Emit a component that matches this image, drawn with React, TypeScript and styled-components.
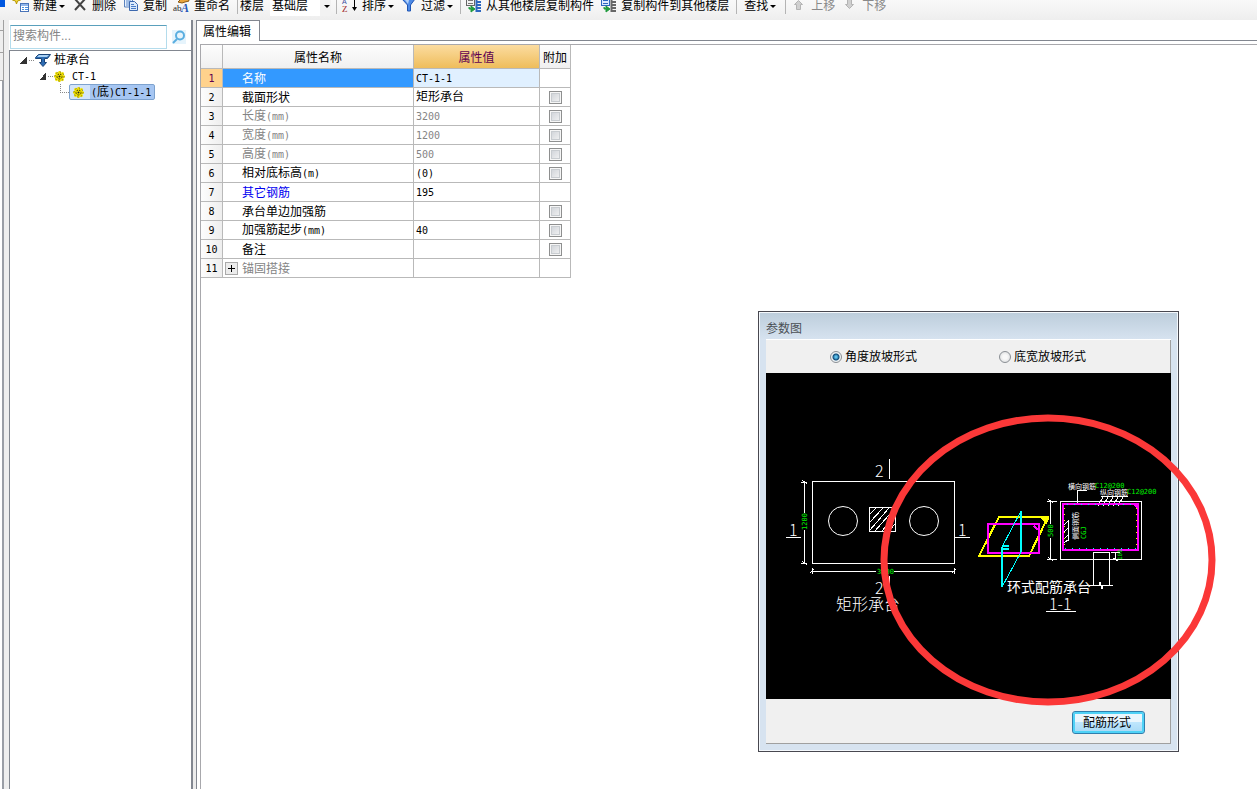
import React, { Fragment, useState } from 'react';
import styled, { createGlobalStyle, css } from 'styled-components';

const line = '#828790';

const GlobalStyle = createGlobalStyle`
  * { box-sizing: border-box; }
  body {
    margin: 0;
    background: #fff;
    color: #000;
    overflow: hidden;
    font: 12px/14px "Liberation Sans", "Noto Sans CJK SC", sans-serif;
  }
  button, input, select { font: inherit; color: inherit; margin: 0; padding: 0; }
`;

/* ---------- text ---------- */

const Latin = styled.span`
  font-family: "DejaVu Sans Mono", monospace;
  font-size: 10px;
`;

function Mixed({ text }: { text: string }) {
  return (
    <span>
      {text.split(/([\x20-\x7e]+)/).map((part, i) =>
        i % 2 ? <Latin key={i}>{part}</Latin> : <Fragment key={i}>{part}</Fragment>
      )}
    </span>
  );
}

/* ---------- toolbar ---------- */

const Screen = styled.div`
  display: flex;
  flex-direction: column;
  height: 100vh;
`;

const Toolbar = styled.div`
  display: flex;
  align-items: flex-start;
  flex: none;
  height: 20px;
  overflow: hidden;
  background: linear-gradient(#f9f9f9, #eeeeee);
  white-space: nowrap;
`;

const CornerMark = styled.span`
  width: 5px;
  height: 7px;
  margin-right: 8px;
  background: #0057e0;
`;

const ToolButton = styled.button<{ $roomy?: boolean }>`
  display: flex;
  align-items: center;
  flex: none;
  height: 12px;
  margin-right: 7px;
  padding: ${p => (p.$roomy ? '0 2px' : '0')};
  border: 0;
  background: none;
  line-height: 14px;
  svg { flex: none; margin-right: 4px; overflow: visible; }
  &:disabled { color: #8a8a8a; }
`;

const Caret = styled.span`
  border: 3px solid transparent;
  border-top-color: #000;
  border-bottom: 0;
  margin-left: 2px;
`;

const Separator = styled.span<{ $tight?: boolean }>`
  flex: none;
  width: 1px;
  height: 14px;
  margin-right: ${p => (p.$tight ? 2 : 5)}px;
  background: #b4b4b4;
`;

const FloorLabel = styled.label`
  flex: none;
  margin-right: 6px;
  line-height: 12px;
`;

const FloorBox = styled.div`
  display: flex;
  align-items: flex-start;
  flex: none;
  width: 61px;
  height: 16px;
  margin-right: 5px;
  background: linear-gradient(90deg, #fff 50px, #f2f2f2 50px);
  ${Caret} { margin-top: 5px; }
`;

const FloorSelect = styled.select`
  appearance: none;
  width: 52px;
  height: 16px;
  padding: 0 0 4px 2px;
  border: 0;
  background: none;
  line-height: 12px;
`;

const icons: Record<string, React.ReactNode> = {
  create: (
    <svg width="16" height="14" viewBox="0 0 16 14">
      <path d="M3.500 -3l1 3 3 1-3 1-1 3-1-3-3-1 3-1z" fill="#f4dc3c" stroke="#b89600" />
      <rect x="7.500" y="4.500" width="8" height="8" fill="#fff" stroke="#4a74b8" />
      <rect x="8" y="5" width="7" height="2" fill="#8fb5ea" />
      <path d="M9 8.500h2M12 8.500h3M9 10.500h2M12 10.500h3" stroke="#4a90e0" />
    </svg>
  ),
  remove: (
    <svg width="16" height="14" viewBox="0 0 16 14">
      <path d="M3 0l10 11M13 0L3 11" stroke="#444" strokeWidth="2" />
    </svg>
  ),
  copy: (
    <svg width="16" height="14" viewBox="0 0 16 14">
      <path d="M1.500-2h6l2 2v8h-8z" fill="#e8f1fc" stroke="#5a82be" />
      <path d="M3 2h5M3 4h3M3 6h3" stroke="#5a8ad0" />
      <path d="M6.500 2.500h5l3 3v6h-8z" fill="#dceafb" stroke="#3c68ae" />
      <path d="M8 5.500h3M8 7.500h5M8 9.500h5" stroke="#4a7cc6" />
    </svg>
  ),
  rename: (
    <svg width="16" height="14" viewBox="0 0 16 14">
      <path d="M4 3l4-4 6 0 1 3-4 1-3 1z" fill="#e9a43c" stroke="#8a5a14" />
      <text x="-1" y="12" fontSize="9" fontFamily="Liberation Serif" fill="#222">ab</text>
      <text x="7" y="13" fontSize="12" fontWeight="bold" fontStyle="italic" fontFamily="Liberation Serif" fill="#2457b8">A</text>
    </svg>
  ),
  sort: (
    <svg width="16" height="14" viewBox="0 0 16 14">
      <text x="0" y="5" fontSize="7" fontFamily="Liberation Sans" fill="#3a4a9c">A</text>
      <text x="0" y="13" fontSize="9" fontFamily="Liberation Serif" fill="#a02828">Z</text>
      <path d="M12.500-1v11" stroke="#000" />
      <path d="M10 8h5l-2.500 4z" />
    </svg>
  ),
  filter: (
    <svg width="16" height="14" viewBox="0 0 16 14">
      <path d="M1 0h13L9.500 6v6h-3V6z" fill="#4d8ae6" stroke="#1f55b4" />
      <path d="M4 1h4l-1 4z" fill="#b4d2fa" />
    </svg>
  ),
  from: (
    <svg width="16" height="14" viewBox="0 0 16 14">
      <rect x=".5" y="-2.500" width="8" height="9" fill="#f2f2f2" stroke="#666" />
      <path d="M2 1.500h5M2 4.500h5" stroke="#777" />
      <path d="M3 8v2h3M5 7l4 3-4 3z" fill="#1e9a3c" stroke="#1e9a3c" />
      <path d="M10.500-1v14M11 0h4M11 3h4M11 6h4M11 9h4M11 12h4" stroke="#2d68c0" strokeWidth="2" />
    </svg>
  ),
  to: (
    <svg width="16" height="14" viewBox="0 0 16 14">
      <rect x=".5" y="-2.500" width="8" height="9" fill="#dceaff" stroke="#2d68c0" />
      <path d="M2 1.500h5M2 4.500h5" stroke="#2d68c0" />
      <path d="M3 8v2h3M5 7l4 3-4 3z" fill="#1e9a3c" stroke="#1e9a3c" />
      <path d="M10.500-1v14M11 0h4M11 3h4M11 6h4M11 9h4M11 12h4" stroke="#666" strokeWidth="2" />
    </svg>
  ),
  up: (
    <svg width="16" height="14" viewBox="0 0 16 14">
      <path d="M7.500 1.500l4 4h-2v5h-4v-5h-2z" fill="#d0d0d0" stroke="#b4b4b4" />
    </svg>
  ),
  down: (
    <svg width="16" height="14" viewBox="0 0 16 14">
      <path d="M7.500 9.500l4-4h-2v-5h-4v5h-2z" fill="#d0d0d0" stroke="#b4b4b4" />
    </svg>
  ),
};

interface ToolProps {
  icon?: string;
  label: string;
  menu?: boolean;
  disabled?: boolean;
}

function Tool({ icon, label, menu, disabled }: ToolProps) {
  return (
    <ToolButton type="button" disabled={disabled} $roomy={!icon}>
      {icon && icons[icon]}
      {label}
      {menu && <Caret />}
    </ToolButton>
  );
}

/* ---------- component tree ---------- */

const Workspace = styled.div`
  display: flex;
  flex: 1;
  min-height: 0;
`;

const Dock = styled.div`
  display: flex;
  flex-direction: column;
  flex: none;
  width: 9px;
  background: #eee;
`;

const DockCell = styled.div<{ $height: number }>`
  width: 4px;
  height: ${p => p.$height}px;
  border: solid #a0a0a0;
  border-width: 0 1px 1px 0;
`;

const DockPage = styled.div`
  flex: 1;
  width: 4px;
  background: #fff;
  border-right: 2px solid #9a9ea6;
`;

const Sidebar = styled.aside`
  display: flex;
  flex-direction: column;
  flex: none;
  width: 184px;
  padding-top: 3px;
  border-right: 2px solid ${line};
`;

const SearchRow = styled.form`
  display: flex;
  align-items: center;
  flex: none;
  gap: 5px;
  height: 27px;
  padding-left: 1px;
`;

const SearchInput = styled.input`
  width: 157px;
  height: 24px;
  padding: 0 2px 2px;
  border: 1px solid #b4dcec;
  border-top-color: #5aa0bc;
  outline: 0;
  &::placeholder { color: #858585; opacity: 1; }
`;

const SearchButton = styled.button`
  width: 14px;
  height: 14px;
  border: 0;
  background: #e6f4fc;
  svg { display: block; }
`;

const Tree = styled.ul`
  flex: 1;
  margin: 0;
  padding: 1px 0 0;
  list-style: none;
  border-top: 1px solid ${line};
  border-left: 1px solid ${line};
`;

const TreeRow = styled.li<{ $indent: number }>`
  display: flex;
  align-items: center;
  height: 16px;
  padding-left: ${p => p.$indent}px;
  svg { flex: none; }
`;

const Toggle = styled.button`
  width: 7px;
  height: 7px;
  border: 0;
  background: linear-gradient(135deg, transparent 50%, #333 50%);
`;

const Link = styled.span`
  width: 5px;
  margin: 0 1px 0 2px;
  border-top: 1px dotted #888;
`;

const ElbowLink = styled.span`
  align-self: flex-start;
  width: 9px;
  height: 9px;
  border: dotted #888;
  border-width: 0 0 1px 1px;
`;

const NodeLabel = styled.span<{ $gap: number }>`
  margin-left: ${p => p.$gap}px;
`;

const Selected = styled.span`
  display: flex;
  align-items: center;
  height: 16px;
  padding: 0 3px;
  border: 1px solid #7da2ce;
  border-radius: 2px;
  background: linear-gradient(90deg, #d3e4fa 20px, #a6c6f2 20px);
`;

function Gear() {
  return (
    <svg width="11" height="11" viewBox="0 0 11 11">
      <circle cx="5.500" cy="5.500" r="4.500" fill="#f4e400" />
      <path
        d="M5.500 0v11M0 5.500h11M1.500 1.500l8 8M9.500 1.500l-8 8"
        stroke="#f4e400"
        strokeWidth="2"
      />
      <circle cx="5.500" cy="5.500" r="4.500" fill="none" stroke="#4c4400" strokeDasharray="1 2.500" />
      <circle cx="5.500" cy="5.500" r="2.500" fill="none" stroke="#3a3400" strokeDasharray="2 1" />
      <circle cx="5.500" cy="5.500" r="1" fill="#222" />
    </svg>
  );
}

/* ---------- property editor ---------- */

const Editor = styled.main`
  display: flex;
  flex-direction: column;
  flex: 1;
  min-width: 0;
  margin-left: 3px;
  border-left: 1px solid ${line};
  box-shadow: -3px 0 #ececec;
`;

const TabBar = styled.div`
  display: flex;
  flex: none;
  height: 21px;
  &::after { content: ""; flex: 1; border-bottom: 1px solid ${line}; }
`;

const Tab = styled.button`
  width: 63px;
  height: 21px;
  padding: 2px 2px 0 0;
  border: solid ${line};
  border-width: 1px 1px 0 0;
  background: #fff;
`;

const EditorBody = styled.div`
  flex: 1;
  margin: 3px 0 0 3px;
  border: solid #a8a8ac;
  border-width: 1px 0 0 1px;
`;

const Grid = styled.table`
  width: 370px;
  table-layout: fixed;
  border-collapse: separate;
  border-spacing: 0;
`;

const cell = css`
  padding: 0;
  border: solid #b9b9b9;
  border-width: 0 1px 1px 0;
  font-weight: normal;
`;

const HeadCell = styled.th<{ $active?: boolean }>`
  ${cell}
  height: 24px;
  padding-top: 2px;
  color: ${p => (p.$active ? '#600050' : '#000')};
  background: ${p => (p.$active ? 'linear-gradient(#fbdca0, #efbd5b)' : 'linear-gradient(#fdfdfd, #f0f0f0)')};
`;

const IndexCell = styled.th<{ $active?: boolean }>`
  ${cell}
  height: 19px;
  color: ${p => (p.$active ? '#600050' : '#000')};
  background: ${p => (p.$active ? '#ffd28c' : 'linear-gradient(90deg, #fdfdfd, #eeeeee)')};
`;

const tones = { normal: '#000', muted: '#848484', link: '#0000f0', selected: '#fff' };
type Tone = keyof typeof tones;

const NameCell = styled.td<{ $tone: Tone }>`
  ${cell}
  color: ${p => tones[p.$tone]};
  background: ${p => (p.$tone === 'selected' ? '#3399ff' : '#fff')};
`;

const NameLayout = styled.div`
  display: flex;
  align-items: flex-end;
  height: 16px;
`;

const ExpandSlot = styled.span`
  display: flex;
  align-self: center;
  flex: none;
  width: 19px;
  padding-left: 2px;
`;

const ExpandButton = styled.button`
  width: 13px;
  height: 13px;
  border: 1px solid #aaa;
  background:
    linear-gradient(#000, #000) center / 7px 1px no-repeat,
    linear-gradient(#000, #000) center / 1px 7px no-repeat,
    #ececec;
`;

const ValueCell = styled.td<{ $muted: boolean; $active: boolean }>`
  ${cell}
  padding-left: 2px;
  color: ${p => (p.$muted ? '#848484' : '#000')};
  background: ${p => (p.$active ? '#e0f0ff' : '#fff')};
`;

const ExtraCell = styled.td`
  ${cell}
  text-align: center;
`;

const Check = styled.input`
  appearance: none;
  display: block;
  width: 13px;
  height: 13px;
  margin: 0 auto;
  border: 1px solid #8e8f8f;
  box-shadow: inset 0 0 0 1px #f6f6f6, inset 0 0 0 2px #c8ccd0;
  background: linear-gradient(135deg, #cbcfd5, #f6f6f6);
  &:checked { background: #3a6ea5; }
`;

interface Property {
  name: string;
  value: string;
  tone: Tone;
  extra?: boolean;
  expandable?: boolean;
}

const properties: Property[] = [
  { name: '名称', value: 'CT-1-1', tone: 'selected' },
  { name: '截面形状', value: '矩形承台', tone: 'normal', extra: true },
  { name: '长度(mm)', value: '3200', tone: 'muted', extra: true },
  { name: '宽度(mm)', value: '1200', tone: 'muted', extra: true },
  { name: '高度(mm)', value: '500', tone: 'muted', extra: true },
  { name: '相对底标高(m)', value: '(0)', tone: 'normal', extra: true },
  { name: '其它钢筋', value: '195', tone: 'link' },
  { name: '承台单边加强筋', value: '', tone: 'normal', extra: true },
  { name: '加强筋起步(mm)', value: '40', tone: 'normal', extra: true },
  { name: '备注', value: '', tone: 'normal', extra: true },
  { name: '锚固搭接', value: '', tone: 'muted', expandable: true },
];

/* ---------- parameter dialog ---------- */

const Dialog = styled.section`
  position: absolute;
  top: 311px;
  right: 78px;
  width: 421px;
  padding: 0 7px 7px;
  border: 1px solid #484850;
  box-shadow: inset 0 0 0 1px #f4f8fc;
  background: linear-gradient(#bccddb, #d7e3f0 28px);
`;

const DialogTitle = styled.h2`
  margin: 0;
  height: 27px;
  padding-top: 10px;
  color: #4a4f55;
  font-size: 12px;
  line-height: 14px;
  font-weight: normal;
`;

const DialogBody = styled.div`
  box-shadow: inset -1px -1px #a0a0a0;
  background: #f0f0f0;
`;

const SlopeChoice = styled.div`
  display: flex;
  align-items: center;
  gap: 82px;
  height: 34px;
  padding-left: 64px;
  border-top: 1px solid #fff;
`;

const Choice = styled.label`
  display: flex;
  align-items: center;
  gap: 3px;
`;

const Radio = styled.input`
  appearance: none;
  width: 12px;
  height: 12px;
  border: 1px solid #8a8f94;
  border-radius: 50%;
  background: radial-gradient(#f8f8f8 30%, #d4d6d8);
  &:checked {
    background: radial-gradient(circle at 5px 5px, #5cc0ec 1px, #0f4a78 3px, #eef2f4 4px);
  }
`;

const Drawing = styled.svg`
  display: block;
  width: 405px;
  height: 326px;
  background: #000;
`;

const DialogFooter = styled.div`
  display: flex;
  justify-content: flex-end;
  height: 45px;
  padding: 12px 26px 0 0;
`;

const RebarButton = styled.button`
  width: 73px;
  height: 23px;
  padding-right: 3px;
  border: 1px solid #2f7fae;
  border-radius: 3px;
  box-shadow: inset 0 0 0 2px #4fd2f7;
  background: linear-gradient(#eaf6fd 50%, #bee6fd 50%, #a7d9f5);
`;

const Marker = styled.svg`
  position: absolute;
  left: 121px;
  top: 101px;
  width: 336px;
  height: 294px;
  pointer-events: none;
`;

const mono = 'DejaVu Sans Mono, monospace';
const cjk = 'Noto Sans CJK SC, sans-serif';
const green = '#00f000';
const slants = [0, 1, 2, 3, 4];

function CapDrawing() {
  return (
    <Drawing viewBox="766 373 405 326" role="img" aria-label="矩形承台">
      <g fill="none" stroke="#fff" shapeRendering="crispEdges">
        <path d="M812.500 481.500h142v82h-142zM869.500 507.500h26v24h-26z" />
        <path d="M870 514l6-6M870 522l13-14M870 530l19-22M875 531l20-23M882 531l13-15M889 531l6-7" />
        <path d="M889.500 459v20M889.500 576v20M786 537.500h15M955 537.500h15" />
        <path d="M804.500 482v31M804.500 530v34M801 482.500h6M802 480l5 4M801 563.500h6M802 561l5 4" />
        <path d="M811 571.500h65M894 571.500h61M812.500 568v6M810 573l4-4M954.500 568v6M952 573l4-4" />
        <path d="M1060.500 501.500h81v58h-81z" />
        <path d="M1050.500 501v23M1050.500 538v22M1047 501.500h10M1048 499l5 4M1047 559.500h10M1048 557l5 4" />
        <path d="M1077.500 505v-15h9M1101 496.500h27" />
        {slants.map(i => (
          <path key={i} d={`M${1103 + i * 5} 497l-5 9`} />
        ))}
        <path d="M1068.500 520v21M1068 521l-4 4M1068 528l-4 4M1068 535l-4 4M1068 540l-4 3" />
        <path d="M1093.500 585v-33h16v33M1089 585.500h10l1-3 2 6 1-3h10" />
        <path d="M1111 552.500h9M1115.500 552v8M1113 558l5 3M1046 611.500h30" />
      </g>
      <g fill="none" stroke="#fff">
        <circle cx="843" cy="521" r="14.500" />
        <circle cx="924" cy="521" r="14.500" />
      </g>
      <g fill="none" strokeWidth="2" shapeRendering="crispEdges">
        <path d="M999 517h49l-19 39h-50z" stroke="#ff0" />
        <path d="M1043 519h5l-2 4z" stroke="#ff0" fill="#ff0" />
        <path d="M988 524h51v29h-51z" stroke="#f0f" />
        <path d="M1034 526l4 4" stroke="#f0f" />
        <path d="M1021 511v41M1002 547v40M1002 546h7M1002 549h7" stroke="#0ff" />
        <path d="M1021 511l-19 36M1002 587l19-35" stroke="#0ff" strokeWidth="1" />
        <path d="M1063 504h75v46h-75z" stroke="#f0f" />
        <path d="M1134 504l4 4v-4z" stroke="#f0f" />
        <path d="M1067 504.500h68M1065 548.500h72" stroke="#0ff" strokeWidth="1" strokeDasharray="1 6" />
        <path d="M1064.500 508v40M1136.500 508v40" stroke="#ff0" strokeWidth="1" strokeDasharray="1 5" />
      </g>
      <g fill="#fff" fontFamily={cjk}>
        <g fontSize="16" fontWeight="300">
          <text x="875" y="477">2</text>
          <text x="875" y="594">2</text>
          <text x="789" y="536">1</text>
          <text x="958" y="536">1</text>
          <text x="1049" y="610">1-1</text>
          <text x="836" y="610">矩形承台</text>
        </g>
        <text x="1007" y="592" fontSize="14">环式配筋承台</text>
        <text x="1068" y="489" fontSize="7">横向钢筋</text>
        <text x="1100" y="495" fontSize="7">纵向钢筋</text>
        <text transform="translate(1078 540) rotate(-90)" fontSize="7">侧面钢筋</text>
      </g>
      <g fill={green} fontFamily={mono} fontSize="7">
        <text x="1095" y="488">C12@200</text>
        <text x="1127" y="494">C12@200</text>
        <text x="877" y="574">3200</text>
        <text transform="translate(807 530) rotate(-90)">1200</text>
        <text transform="translate(1053 537) rotate(-90)">500</text>
        <text transform="translate(1086 539) rotate(-90)">CGJ</text>
        <text transform="translate(1122 560) rotate(-90)" fontSize="6">100</text>
      </g>
    </Drawing>
  );
}

function ParameterDialog() {
  const [slope, setSlope] = useState('角度放坡形式');
  return (
    <Dialog role="dialog" aria-labelledby="param-title">
      <DialogTitle id="param-title">参数图</DialogTitle>
      <DialogBody>
        <SlopeChoice role="radiogroup">
          {['角度放坡形式', '底宽放坡形式'].map(name => (
            <Choice key={name}>
              <Radio type="radio" name="slope" checked={slope === name} onChange={() => setSlope(name)} />
              {name}
            </Choice>
          ))}
        </SlopeChoice>
        <CapDrawing />
        <DialogFooter>
          <RebarButton type="button">配筋形式</RebarButton>
        </DialogFooter>
      </DialogBody>
      <Marker viewBox="0 0 336 294">
        <ellipse cx="168" cy="147" rx="164" ry="142" fill="none" stroke="#fb3838" strokeWidth="7" />
      </Marker>
    </Dialog>
  );
}

export default function App() {
  return (
    <Screen>
      <GlobalStyle />
      <Toolbar role="toolbar">
        <CornerMark />
        <Tool icon="create" label="新建" menu />
        <Tool icon="remove" label="删除" />
        <Tool icon="copy" label="复制" />
        <Tool icon="rename" label="重命名" />
        <Separator $tight />
        <FloorLabel htmlFor="floor">楼层</FloorLabel>
        <FloorBox>
          <FloorSelect id="floor">
            <option>基础层</option>
          </FloorSelect>
          <Caret />
        </FloorBox>
        <Separator />
        <Tool icon="sort" label="排序" menu />
        <Tool icon="filter" label="过滤" menu />
        <Separator />
        <Tool icon="from" label="从其他楼层复制构件" />
        <Tool icon="to" label="复制构件到其他楼层" />
        <Separator />
        <Tool label="查找" menu />
        <Separator />
        <Tool icon="up" label="上移" disabled />
        <Tool icon="down" label="下移" disabled />
      </Toolbar>
      <Workspace>
        <Dock>
          <DockCell $height={11} />
          <DockCell $height={22} />
          <DockCell $height={28} />
          <DockPage />
        </Dock>
        <Sidebar>
          <SearchRow onSubmit={e => e.preventDefault()}>
            <SearchInput type="text" aria-label="搜索构件" placeholder="搜索构件..." />
            <SearchButton type="submit" aria-label="搜索">
              <svg width="14" height="14" viewBox="0 0 14 14" fill="none" stroke="#5aaee0">
                <circle cx="8" cy="5.500" r="4" strokeWidth="2" />
                <path d="M5 9l-4 4" strokeWidth="2" />
              </svg>
            </SearchButton>
          </SearchRow>
          <Tree>
            <TreeRow $indent={10}>
              <Toggle type="button" aria-label="折叠" />
              <Link />
              <svg width="16" height="14" viewBox="0 0 16 14">
                <path d="M.5 4.500l3-3h12l-3 4h-3v4h2l-3.500 4-3.500-4h2v-4h-6z" fill="#2c6cb4" stroke="#1a4478" />
                <path d="M2 4h10l2-2H4z" fill="#a8d0f4" />
              </svg>
              <NodeLabel $gap={3}>桩承台</NodeLabel>
            </TreeRow>
            <TreeRow $indent={29}>
              <Toggle type="button" aria-label="折叠" />
              <Link />
              <Gear />
              <NodeLabel $gap={7}>
                <Mixed text="CT-1" />
              </NodeLabel>
            </TreeRow>
            <TreeRow $indent={50}>
              <ElbowLink />
              <Selected>
                <Gear />
                <NodeLabel $gap={7}>
                  <Mixed text="(底)CT-1-1" />
                </NodeLabel>
              </Selected>
            </TreeRow>
          </Tree>
        </Sidebar>
        <Editor>
          <TabBar role="tablist">
            <Tab type="button" role="tab" aria-selected="true">属性编辑</Tab>
          </TabBar>
          <EditorBody>
            <Grid>
              <colgroup>
                <col width="22" />
                <col width="191" />
                <col width="126" />
                <col width="31" />
              </colgroup>
              <thead>
                <tr>
                  <HeadCell />
                  <HeadCell scope="col">属性名称</HeadCell>
                  <HeadCell scope="col" $active>属性值</HeadCell>
                  <HeadCell scope="col">附加</HeadCell>
                </tr>
              </thead>
              <tbody>
                {properties.map((p, i) => (
                  <tr key={p.name}>
                    <IndexCell scope="row" $active={i === 0}>
                      <Mixed text={String(i + 1)} />
                    </IndexCell>
                    <NameCell $tone={p.tone}>
                      <NameLayout>
                        <ExpandSlot>
                          {p.expandable && <ExpandButton type="button" aria-label="展开" />}
                        </ExpandSlot>
                        <Mixed text={p.name} />
                      </NameLayout>
                    </NameCell>
                    <ValueCell $muted={p.tone === 'muted'} $active={i === 0}>
                      <Mixed text={p.value} />
                    </ValueCell>
                    <ExtraCell>
                      {p.extra && <Check type="checkbox" aria-label={`附加 ${p.name}`} />}
                    </ExtraCell>
                  </tr>
                ))}
              </tbody>
            </Grid>
          </EditorBody>
        </Editor>
      </Workspace>
      <ParameterDialog />
    </Screen>
  );
}
